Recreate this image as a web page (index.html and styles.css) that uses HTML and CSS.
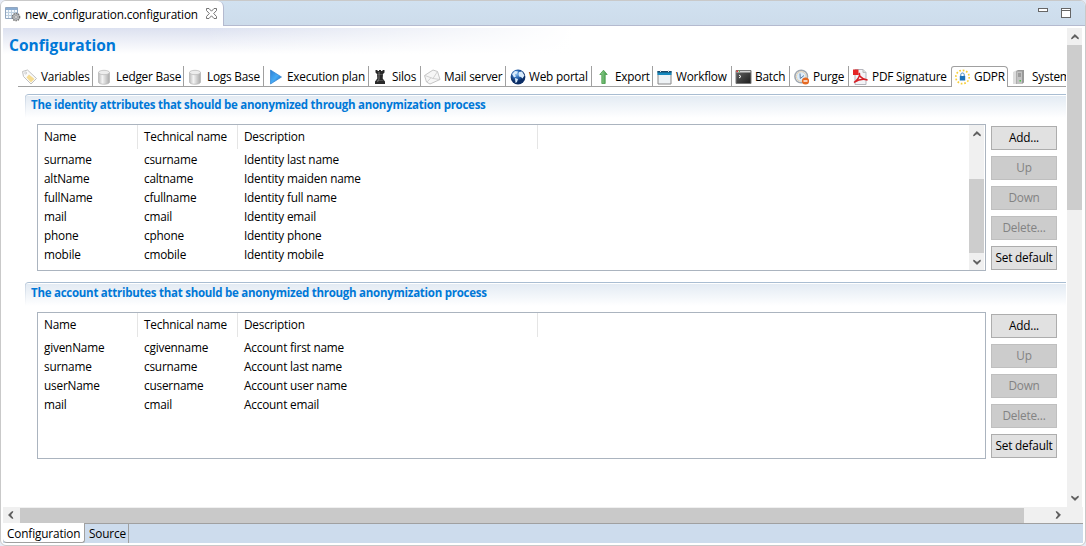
FILE: index.html
```html
<!DOCTYPE html>
<html lang="en">
<head>
<meta charset="utf-8">
<title>new_configuration.configuration</title>
<link rel="stylesheet" href="styles.css">
</head>
<body>
<svg width="0" height="0" class="defs">
  <defs>
    <linearGradient id="metal"><stop offset="0" stop-color="#bbb"/><stop offset=".35" stop-color="#f4f4f4"/><stop offset="1" stop-color="#a9a9a9"/></linearGradient>
    <linearGradient id="blue" x2="1" y2="1"><stop offset="0" stop-color="#2b7fd4"/><stop offset=".5" stop-color="#45aaf5"/><stop offset="1" stop-color="#1560b8"/></linearGradient>
    <radialGradient id="globe" cx=".4" cy=".3"><stop offset="0" stop-color="#8fc4f5"/><stop offset=".5" stop-color="#2b69b5"/><stop offset="1" stop-color="#0b2d66"/></radialGradient>
    <linearGradient id="green"><stop offset="0" stop-color="#9bd69a"/><stop offset="1" stop-color="#3f9a45"/></linearGradient>
    <linearGradient id="dark" x2="1" y2="1"><stop offset="0" stop-color="#666"/><stop offset="1" stop-color="#1c1c1c"/></linearGradient>
    <symbol id="cyl" viewBox="0 0 16 16"><path d="M1.500 3.500v9.500c0 3 11 3 11 0V3.500z" fill="url(#metal)" stroke="#b5b5b5" stroke-width=".7"/><ellipse cx="7" cy="3.500" rx="5.500" ry="2.200" fill="#ededed" stroke="#bcbcbc" stroke-width=".8"/></symbol>
    <symbol id="arrow" viewBox="0 0 8 6"><path d="M.7 5V3.800L4 .5l3.300 3.300V5L4 2.600z" fill="#555" stroke="#555" stroke-width=".7"/></symbol>
  </defs>
</svg>
<div class="window">
  <header class="titlebar">
    <div class="editor-tab">
      <svg class="icon" viewBox="0 0 16 16"><path d="M.5 1.500h12v11H.5z" fill="#f5f9fd" stroke="#91a6bf"/><path d="M1 2h11v2H1z" fill="#8bacd1"/><path d="M1 6.500h11M1 9.500h11M3.500 4v8M6.500 4v8M9.500 4v8" stroke="#bdcfdf"/><circle cx="11" cy="11" r="3.600" fill="#b9bcbf" stroke="#777" stroke-width="1.500" stroke-dasharray="1.500 .8"/><circle cx="11" cy="11" r="1.300" fill="#fff" stroke="#777" stroke-width=".6"/></svg>
      <span class="editor-name">new_configuration.configuration</span>
      <svg class="close" viewBox="0 0 11 11"><path d="M.5.5h2.500l2.500 2.700L8 .5h2.500v2L7.700 5.500l2.800 3v2H8L5.500 7.800 3 10.500H.5v-2l2.800-3-2.800-3z" fill="#fff" stroke="#666" stroke-width=".9"/></svg>
    </div>
    <div class="window-tools"><span class="minimize"></span><span class="maximize"></span></div>
  </header>

  <div class="viewport">
    <main class="form">
      <h1 class="form-title">Configuration</h1>
      <nav class="tabs">
        <div class="tab variables"><svg class="icon" viewBox="0 0 16 16"><path d="M.5 2.500l5-1.500L14.500 9.500 9 15 1.500 7.500z" fill="#fafafa" stroke="#c0c0c0"/><path d="M7 5.500l5.500 4.500-3.500 3.500L4.500 8.500z" fill="#f6dc92"/><circle cx="3.700" cy="4" r="1" fill="#fff" stroke="#bbb" stroke-width=".7"/></svg><span>Variables</span></div>
        <div class="tab ledger"><svg class="icon"><use href="#cyl"/></svg><span>Ledger Base</span></div>
        <div class="tab logs"><svg class="icon"><use href="#cyl"/></svg><span>Logs Base</span></div>
        <div class="tab execution"><svg class="icon" viewBox="0 0 16 16"><path d="M2.500 1l11 7-11 7z" fill="url(#blue)" stroke="#2b7fd0" stroke-width=".7"/></svg><span>Execution plan</span></div>
        <div class="tab silos"><svg class="icon" viewBox="0 0 16 16"><path d="M2.500 1h2v1h1.500V1h2v1h1.500V1h2v2.500L10 5l-.3 4.500 2.300 3V15H2v-2.500l2.300-3L4 5 2.500 3.500z" fill="#292929"/><path d="M6 3v7l-1.500 3" fill="none" stroke="#888" stroke-width=".8"/><path d="M4 5.500h6M3.500 11.500h7" stroke="#777" stroke-width=".5"/></svg><span>Silos</span></div>
        <div class="tab mail"><svg class="icon" viewBox="0 0 16 16"><path d="M-.5 6.500L8 1l4.500 1.500 2.500 8L5 15 1.500 13z" fill="#f6f6f6" stroke="#b8b8b8" stroke-width=".8"/><path d="M0 6.500l8 3L12.500 2.500M2 13l4-4.300M8 9.500l7 1" fill="none" stroke="#c8c8c8" stroke-width=".8"/></svg><span>Mail server</span></div>
        <div class="tab portal"><svg class="icon" viewBox="0 0 16 16"><circle cx="8" cy="8" r="7.400" fill="url(#globe)"/><path d="M2 5l3-3 3 .5-1 2-2 1 1 2-2 1zM9 3l3-.5 2.500 4-2 3L11 8 9 7.500 8.500 5zM5 9l3 1-1 3-1.500 1z" fill="#d8ebfc"/></svg><span>Web portal</span></div>
        <div class="tab export"><svg class="icon" viewBox="0 0 16 16"><path d="M7.500 1.200l3.700 4.300H9.200v9H5.800v-9h-2z" fill="url(#green)" stroke="#479b49" stroke-width=".8"/></svg><span>Export</span></div>
        <div class="tab workflow"><svg class="icon" viewBox="0 0 16 16"><path d="M1 3h13v12H1z" fill="#eef2f5" stroke="#888"/><path d="M.5 2h14v4H.5z" fill="#1688bd"/><path d="M.5 2h14v1.500H.5z" fill="#1b4868"/><path d="M3.500 1v2M11.500 1v2" stroke="#ddd"/></svg><span>Workflow</span></div>
        <div class="tab batch"><svg class="icon" viewBox="0 0 16 16"><path d="M0 1.500h15v13H0z" fill="url(#dark)" stroke="#777"/><path d="M.5 2h14v1.500H.5z" fill="#d4d4d4"/><path d="M.5 1.500H2V3H.5z" fill="#e33"/><path d="M3 1.500h1V3H3z" fill="#6b4"/><path d="M3 6l2 1.500L3 9" fill="none" stroke="#fff"/></svg><span>Batch</span></div>
        <div class="tab purge"><svg class="icon" viewBox="0 0 16 16"><circle cx="7.200" cy="7.500" r="6.300" fill="#f5f9fd" stroke="#a0a8b2" stroke-width="1.600"/><circle cx="7.200" cy="7.500" r="4.800" fill="#dcecfb" stroke="#e2c89c" stroke-width=".8"/><path d="M6 4.500l.3 5L10 6.500" fill="none" stroke="#5f80a3"/><circle cx="11.500" cy="12" r="3.600" fill="#e66820"/><path d="M9.500 12h4" stroke="#fff" stroke-width="1.400"/></svg><span>Purge</span></div>
        <div class="tab pdf"><svg class="icon" viewBox="0 0 16 16"><path d="M2 .5h8l3 3v12H2z" fill="#f4f4f7" stroke="#b5b5bd"/><path d="M10 .5v3h3" fill="#ddd" stroke="#bbb"/><path d="M0 .5h5.500V6H0z" fill="#e52525"/><path d="M1 13.500C4.500 11 7.500 6.500 6.500 4.500c-1.500 0 1 6 8 6.500-4-1.500-9-.5-13.500 2.500z" fill="none" stroke="#d61f26" stroke-width="1.500"/></svg><span>PDF Signature</span></div>
        <div class="tab gdpr active"><svg class="icon" viewBox="0 0 16 16"><circle cx="7.500" cy="8" r="6.700" fill="none" stroke="#f7cf38" stroke-width="1.700" stroke-dasharray="1.700 1.808"/><path d="M4.800 7h5.400v4.500H4.800z" fill="#1c72b8"/><path d="M5.800 7V5.500c0-2 3.400-2 3.400 0V7" fill="none" stroke="#3984c0"/></svg><span>GDPR</span></div>
        <div class="tab system"><svg class="icon" viewBox="0 0 16 16"><path d="M1 3l4-2h6v12l-2 2H1z" fill="#ddd"/><path d="M4 2.500L6 1h6v12.500L10 15H4z" fill="#999"/><path d="M4.500 2.500H10V15H4.500z" fill="#c2c2c2"/><path d="M6 5h3M6 7h3" stroke="#777"/><path d="M7.500 11H9v1.500H7.500z" fill="#4cc94a"/></svg><span>System</span></div>
      </nav>

      <section class="section">
        <h2 class="section-title">The identity attributes that should be anonymized through anonymization process</h2>
        <div class="section-body">
          <div class="table">
            <div class="cols">
              <div class="row head"><span>Name</span><span>Technical name</span><span>Description</span></div>
              <div class="row"><span>surname</span><span>csurname</span><span>Identity last name</span></div>
              <div class="row"><span>altName</span><span>caltname</span><span>Identity maiden name</span></div>
              <div class="row"><span>fullName</span><span>cfullname</span><span>Identity full name</span></div>
              <div class="row"><span>mail</span><span>cmail</span><span>Identity email</span></div>
              <div class="row"><span>phone</span><span>cphone</span><span>Identity phone</span></div>
              <div class="row"><span>mobile</span><span>cmobile</span><span>Identity mobile</span></div>
            </div>
            <div class="scroll table-scroll"><svg class="up"><use href="#arrow"/></svg><div class="thumb"></div><svg class="down"><use href="#arrow"/></svg></div>
          </div>
          <div class="buttons">
            <button class="btn">Add...</button>
            <button class="btn" disabled>Up</button>
            <button class="btn" disabled>Down</button>
            <button class="btn" disabled>Delete...</button>
            <button class="btn">Set default</button>
          </div>
        </div>
      </section>

      <section class="section">
        <h2 class="section-title">The account attributes that should be anonymized through anonymization process</h2>
        <div class="section-body">
          <div class="table">
            <div class="cols">
              <div class="row head"><span>Name</span><span>Technical name</span><span>Description</span></div>
              <div class="row"><span>givenName</span><span>cgivenname</span><span>Account first name</span></div>
              <div class="row"><span>surname</span><span>csurname</span><span>Account last name</span></div>
              <div class="row"><span>userName</span><span>cusername</span><span>Account user name</span></div>
              <div class="row"><span>mail</span><span>cmail</span><span>Account email</span></div>
            </div>
          </div>
          <div class="buttons">
            <button class="btn">Add...</button>
            <button class="btn" disabled>Up</button>
            <button class="btn" disabled>Down</button>
            <button class="btn" disabled>Delete...</button>
            <button class="btn">Set default</button>
          </div>
        </div>
      </section>
    </main>
    <div class="scroll page-scroll"><svg class="up"><use href="#arrow"/></svg><div class="thumb"></div><svg class="down"><use href="#arrow"/></svg></div>
  </div>
  <div class="hscroll"><svg class="left"><use href="#arrow"/></svg><div class="thumb"></div><svg class="right"><use href="#arrow"/></svg></div>
  <footer class="page-tabs"><div class="page-tab current">Configuration</div><div class="page-tab source">Source</div></footer>
</div>
</body>
</html>
```
FILE: styles.css
```css
* { box-sizing: border-box; }
body {
  margin: 0;
  width: 1086px;
  height: 546px;
  overflow: hidden;
  background: #e6ebf6;
  color: #000;
  font: 11.8px/19px "Open Sans", "Noto Sans", sans-serif;
  letter-spacing: -0.2px;
  white-space: nowrap;
}
.defs { position: absolute; }
svg { display: block; flex: none; }
.window {
  display: flex;
  flex-direction: column;
  height: 546px;
  padding: 0 2px 2px;
  border: 1px solid #c9c9c9;
  border-radius: 6px;
  background: #fff;
}
.titlebar {
  display: flex;
  justify-content: space-between;
  height: 25px;
  margin: 0 -2px;
  border-bottom: 1px solid #b4bacf;
  border-radius: 5px 5px 0 0;
  background: linear-gradient(#d1e1f0, #cddceb);
}
.editor-tab {
  display: flex;
  align-items: center;
  width: 223px;
  height: 25px;
  padding-left: 4px;
  border-right: 1px solid #b4bacf;
  border-radius: 5px 6px 0 0;
  background: #fff;
}
.icon { width: 16px; height: 16px; overflow: visible; }
.editor-name { width: 185px; padding: 1px 0 0 4px; letter-spacing: -0.17px; }
.close { width: 11px; height: 11px; }
.window-tools { display: flex; gap: 13px; padding: 7px 14px 0 0; }
.minimize, .maximize { width: 10px; height: 4px; border: 1px solid #666; background: #fff; }
.maximize { height: 10px; box-shadow: inset 0 1px #fff, inset 0 2px #666; }

.viewport { display: flex; height: 479px; margin-top: 2px; }
.form {
  flex: none;
  width: 1063px;
  height: 479px;
  margin-right: 1px;
  overflow: hidden;
  background:
    linear-gradient(to right, transparent, transparent 200px, #fff 570px) 0 0 / 100% 26px no-repeat,
    linear-gradient(#dce1f0, #fff) 0 0 / 100% 26px no-repeat,
    #fff;
}
.form-title {
  height: 38px;
  margin: 0;
  padding: 6px 0 0 6px;
  color: #0078d7;
  font-size: 15.5px;
  line-height: 23px;
  letter-spacing: 0;
}
.tabs { display: flex; height: 21px; margin-left: 15px; border-bottom: 1px solid #a0a0a0; }
.tab {
  display: flex;
  gap: 3px;
  flex: none;
  height: 20px;
  padding-left: 4px;
  border-right: 1px solid #a0a0a0;
  line-height: 21px;
}
.tab .icon { margin-top: 3px; }
.variables { width: 75px; }
.ledger { width: 91px; }
.logs { width: 80px; }
.execution { width: 105px; }
.silos { width: 52px; }
.mail { width: 85px; }
.portal { width: 86px; }
.export { width: 61px; }
.workflow { width: 79px; }
.batch { width: 58px; }
.purge { width: 59px; }
.pdf { width: 102px; border-right: 0; }
.gdpr { width: 57px; }
.active {
  height: 21px;
  padding-left: 3px;
  border: solid #a0a0a0;
  border-width: 1px 1px 0;
  border-radius: 3px 4px 0 0;
  background: #fff;
  line-height: 19px;
}
.active .icon { margin-top: 2px; }
.system { gap: 4px; border-right: 0; }

.section { height: 188px; margin-left: 22px; padding-top: 7px; }
.section-title {
  height: 24px;
  margin: 0;
  padding-left: 6px;
  border-top: 1px solid #a9bdd2;
  border-radius: 4px 0 0 0;
  background:
    linear-gradient(#c6d3e2, #fff) 0 0 / 1px 100% no-repeat,
    linear-gradient(#fff, #fff) 0 0 / 100% 1px no-repeat,
    linear-gradient(#e2eaf3, #fff);
  color: #0078d7;
  font-size: 11.5px;
  line-height: 20px;
  letter-spacing: -0.26px;
}
.section-body { display: flex; gap: 5px; padding: 6px 0 0 12px; }
.table { display: flex; flex: none; width: 949px; height: 147px; border: 1px solid #abb4bf; }
.cols { flex: 1; }
.row { display: flex; height: 19px; line-height: 20px; }
.row span { width: 100px; padding-left: 6px; }
.row span:last-child { width: 300px; }
.head { height: 24px; line-height: 23px; }
.head span { border-right: 1px solid #e5e5e5; }
.buttons { display: flex; flex-direction: column; gap: 6px; padding-top: 2px; }
.btn {
  width: 66px;
  height: 24px;
  padding: 0 0 2px;
  border: 1px solid #adadad;
  background: #e1e1e1;
  color: #000;
  font: inherit;
  letter-spacing: inherit;
}
.btn:disabled { border-color: #bfbfbf; background: #ccc; color: #838383; }

.scroll { display: flex; flex-direction: column; align-items: center; flex: none; background: #f0f0f0; }
.scroll svg, .hscroll svg { width: 8px; height: 6px; }
.down { transform: rotate(180deg); }
.left { transform: rotate(-90deg); }
.right { transform: rotate(90deg); }
.scroll .thumb { width: 100%; background: #cdcdcd; }
.table-scroll { width: 15px; margin-right: 1px; padding-top: 6px; }
.table-scroll .thumb { height: 74px; margin: 42px 0 6px; }
.page-scroll { width: 15px; padding-top: 6px; }
.page-scroll .thumb { height: 165px; margin: 5px 0 285px; }
.hscroll { display: flex; align-items: center; width: 1064px; height: 16px; padding-left: 4px; background: #f0f0f0; box-shadow: 16px 0 #f0f0f0; }
.hscroll .thumb { width: 1004px; height: 15px; margin: 0 30px 0 5px; background: #c9c9c9; }
.page-tabs { display: flex; height: 20px; width: 1080px; border-top: 1px solid #a0a0a0; background: #cddced; line-height: 19px; }
.page-tab { padding-left: 4px; border-right: 1px solid #a0a0a0; letter-spacing: -0.15px; }
.current { width: 82px; margin-top: -1px; border-bottom: 1px solid #a0a0a0; border-radius: 0 0 3px 4px; background: #fff; line-height: 20px; }
.source { width: 44px; }
```
